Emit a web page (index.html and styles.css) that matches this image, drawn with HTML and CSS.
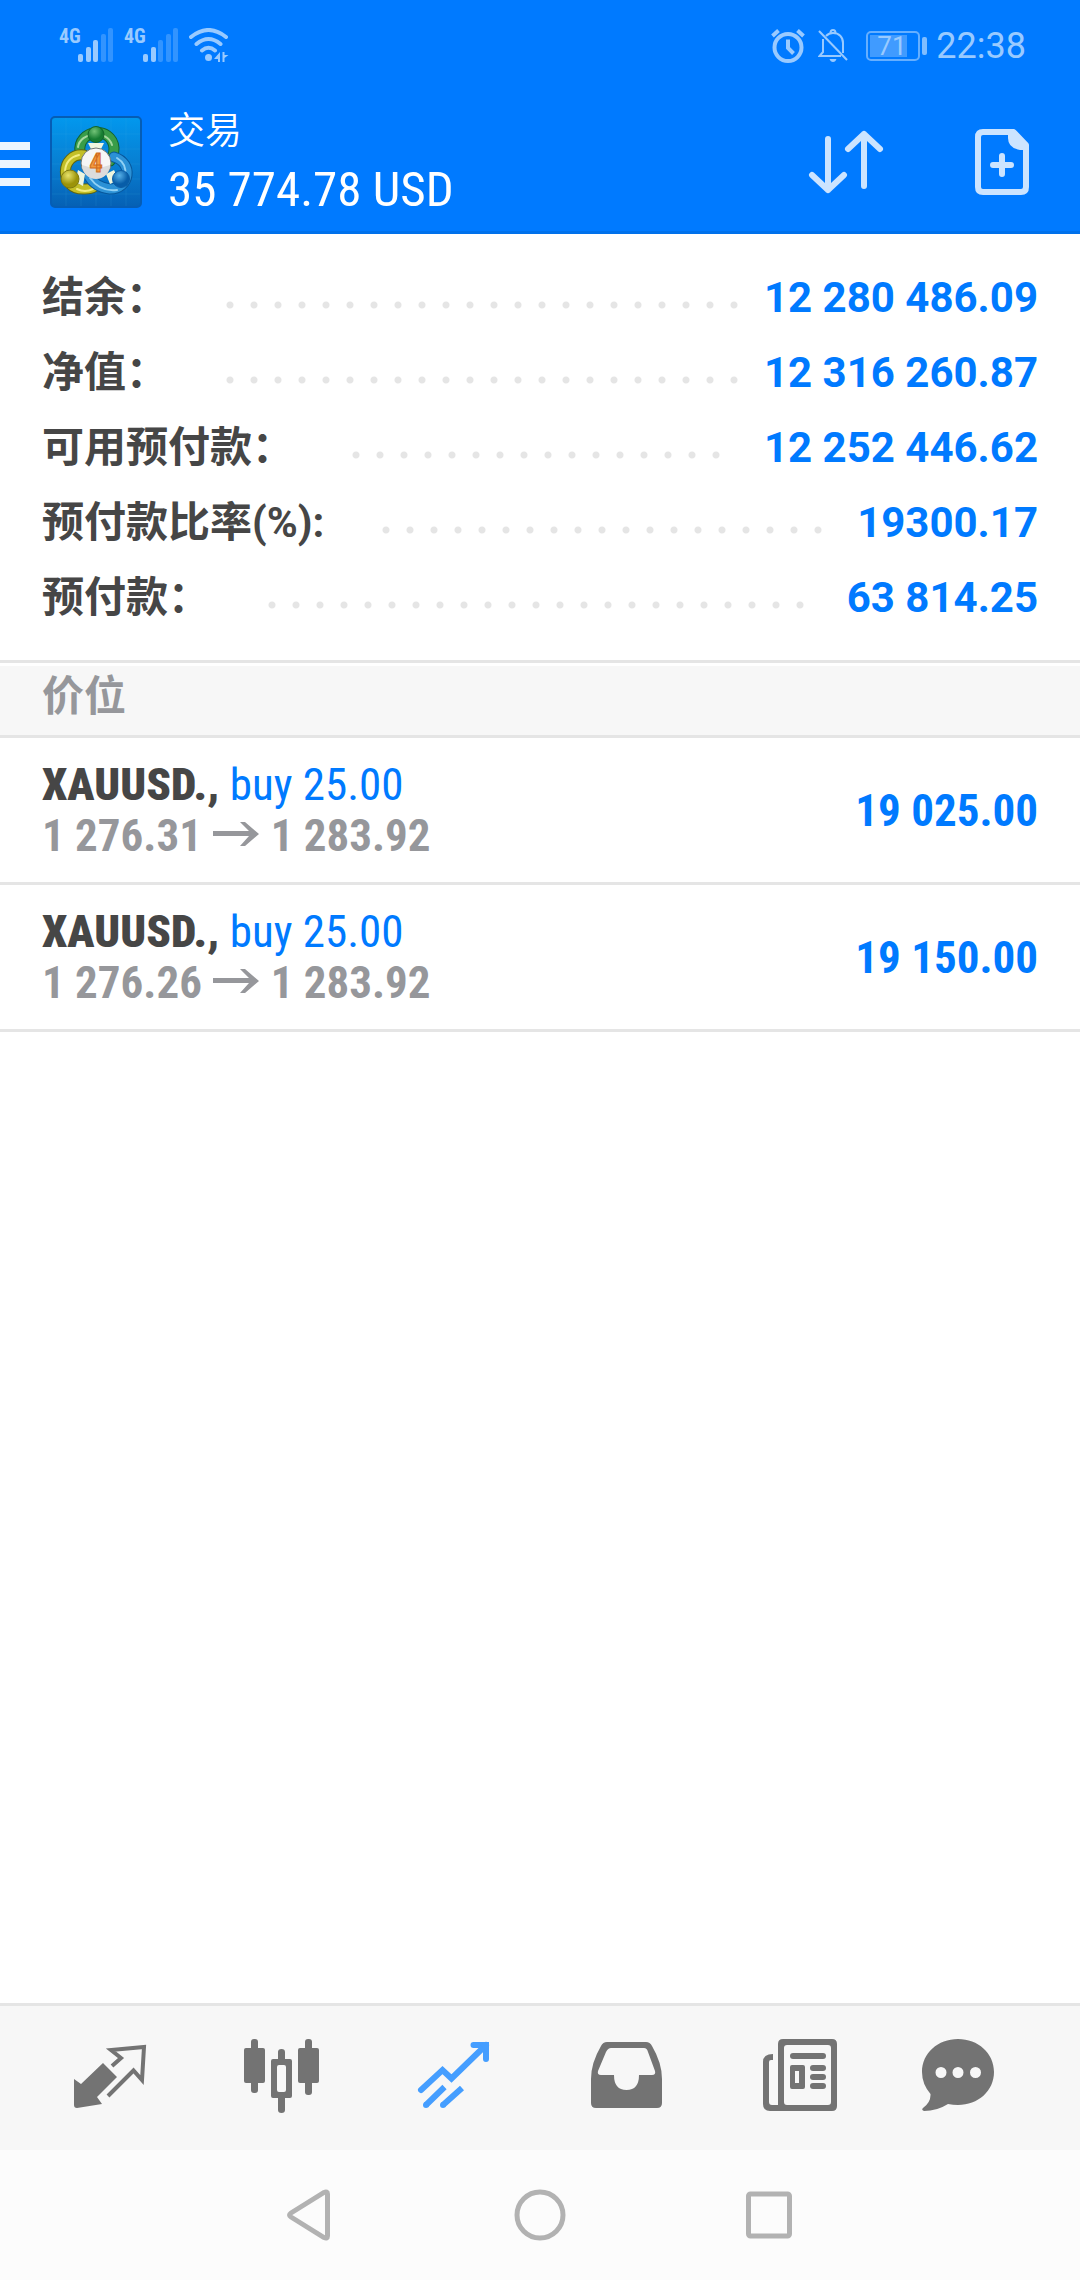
FILE: index.html
```html
<!DOCTYPE html>
<html lang="zh-CN">
<head>
<meta charset="utf-8">
<meta name="viewport" content="width=device-width, initial-scale=1">
<title>交易</title>
<link rel="stylesheet" href="styles.css">
</head>
<body>
<header class="header">
  <div class="status">
    <div class="status-group">
      <div class="signal">
        <span class="network">4G</span>
        <svg width="36" height="34" viewBox="0 0 36 34" fill="currentColor" aria-hidden="true">
          <rect x="0" y="26" width="5" height="8" rx="2"/><rect x="8" y="19" width="5" height="15" rx="2"/><rect x="15" y="12" width="5" height="22" rx="2"/>
          <g opacity=".33"><rect x="23" y="6" width="5" height="28" rx="2"/><rect x="30" y="0" width="5" height="34" rx="2"/></g>
        </svg>
      </div>
      <div class="signal">
        <span class="network">4G</span>
        <svg width="36" height="34" viewBox="0 0 36 34" fill="currentColor" aria-hidden="true">
          <rect x="0" y="26" width="5" height="8" rx="2"/><rect x="8" y="19" width="5" height="15" rx="2"/>
          <g opacity=".33"><rect x="15" y="12" width="5" height="22" rx="2"/><rect x="23" y="6" width="5" height="28" rx="2"/><rect x="30" y="0" width="5" height="34" rx="2"/></g>
        </svg>
      </div>
      <svg class="wifi" width="40" height="34" viewBox="0 0 40 34" fill="none" stroke="currentColor" stroke-width="4" stroke-linecap="round" aria-hidden="true">
        <path d="M2 9Q19.500-5 37 9M7.500 16Q19.500 6 31.500 16M13 22.500Q19.500 17 26 22.500"/>
        <circle cx="19.500" cy="29.500" r="3.500" fill="currentColor" stroke="none"/>
        <path d="M31 24v10h-2v-3h-4zM33.500 24v10h2v-4l4-3h-4v-3z" fill="currentColor" stroke="none"/>
      </svg>
    </div>
    <div class="status-group status-right">
      <svg width="34" height="34" viewBox="0 0 34 34" fill="none" stroke="currentColor" stroke-width="4" aria-hidden="true">
        <circle cx="17" cy="18.500" r="13.500"/><path d="M17 10.500v8.500l5.500 5.500"/><path d="M1.500 7l6-5.500M32.500 7l-6-5.500"/>
      </svg>
      <svg class="bell" width="30" height="34" viewBox="0 0 30 34" fill="none" stroke="currentColor" stroke-width="2" aria-hidden="true">
        <path d="M5 10v13l-3.500 4H23M8 7Q11 4 15 4c6 0 10 4 10 10v10"/><path d="M12.500 4Q12.500 1 15 1t2.500 3"/><path d="M1 2l28 29"/><path d="M11.500 30h7q-1 3-3.500 3t-3.500-3z" fill="currentColor" stroke="none"/>
      </svg>
      <div class="battery"><span class="battery-level">71</span></div>
      <span class="clock">22:38</span>
    </div>
  </div>
  <div class="toolbar">
    <button class="menu" type="button" aria-label="菜单"><span></span><span></span><span></span></button>
    <svg class="logo" width="92" height="92" viewBox="0 0 92 92" aria-hidden="true">
      <defs>
        <linearGradient id="sky" x1="0" y1="0" x2="0" y2="1"><stop offset="0" stop-color="#0298ee"/><stop offset=".55" stop-color="#087dd0"/><stop offset="1" stop-color="#0560b4"/></linearGradient>
        <radialGradient id="green" cx=".4" cy=".3"><stop offset="0" stop-color="#72c377"/><stop offset="1" stop-color="#167c31"/></radialGradient>
        <radialGradient id="gold" cx=".4" cy=".3"><stop offset="0" stop-color="#e8e36b"/><stop offset="1" stop-color="#9b9309"/></radialGradient>
        <radialGradient id="azure" cx=".4" cy=".3"><stop offset="0" stop-color="#58b2e9"/><stop offset="1" stop-color="#075da8"/></radialGradient>
      </defs>
      <rect x="1" y="1" width="90" height="90" rx="4" fill="url(#sky)" stroke="#055db5" stroke-width="2"/>
      <path d="M16 2v88M31 2v88M46 2v88M61 2v88M76 2v88M2 18h88M2 33h88M2 48h88M2 63h88M2 78h88" stroke="#43b3ee" stroke-opacity=".15"/>
      <g fill="none" stroke-linecap="round">
        <path d="M30 36C27 13 62 9 64 32q0 8-4 13" stroke="#126331" stroke-width="11"/>
        <path d="M30 36C27 13 62 9 64 32q0 8-4 13" stroke="#399d49" stroke-width="9"/>
        <path d="M28 31C30 16 57 13 62 29" stroke="#a6d99f" stroke-width="2"/>
        <path d="M34 39C10 36 8 75 35 73q6 0 9-2" stroke="#5f6411" stroke-width="11"/>
        <path d="M34 39C10 36 8 75 35 73q6 0 9-2" stroke="#c3bf27" stroke-width="9"/>
        <path d="M29 39Q15 42 15 57M27 73q8 4 16 0" stroke="#f3ec80" stroke-width="2"/>
        <path d="M64 41C84 47 80 73 60 73Q45 71 39 60" stroke="#07579b" stroke-width="11"/>
        <path d="M64 41C84 47 80 73 60 73Q45 71 39 60" stroke="#2b91d6" stroke-width="9"/>
        <path d="M67 42q10 6 8 17M40 62q10 14 27 12" stroke="#90d1f5" stroke-width="2"/>
      </g>
      <path d="M38 27h16l-4 8h-8zM28 54l7 4-2 12-8-4zM64 54l-8 4 4 10 9-4z" fill="#eef6df"/>
      <circle cx="46" cy="18.500" r="8" fill="url(#green)" stroke="#116428"/>
      <circle cx="20" cy="63" r="9" fill="url(#gold)" stroke="#7e7911"/>
      <circle cx="71" cy="63" r="8.500" fill="url(#azure)" stroke="#0b5ca5"/>
      <circle cx="46" cy="47" r="15" fill="#f6f6f6" stroke="#6f7772"/>
      <path d="M32 49a14 14 0 0 0 28 0q-14 5-28 0z" fill="#dcdcdc"/>
      <text class="logo-digit" x="46" y="56" text-anchor="middle">4</text>
    </svg>
    <div class="heading">
      <h1 class="title">交易</h1>
      <p class="total">35 774.78 USD</p>
    </div>
    <button class="tool" type="button" aria-label="排序">
      <svg width="76" height="66" viewBox="0 0 76 66" fill="none" stroke="currentColor" stroke-width="6" stroke-linecap="round" stroke-linejoin="round">
        <path d="M20 10v51M4 46l16 15 16-15M56 57V5M40 20L56 5l16 15"/>
      </svg>
    </button>
    <button class="tool" type="button" aria-label="新订单">
      <svg width="54" height="66" viewBox="0 0 54 66" fill="none" stroke="currentColor" stroke-width="6" stroke-linejoin="round" stroke-linecap="round">
        <path d="M8 3h30.500L51 16v42q0 5-5 5H8q-5 0-5-5V8q0-5 5-5z"/><path d="M33 3h6l13 13v5h-7q-12-2-12-12z" fill="currentColor" stroke="none"/><path d="M27 27v18M18 36h18"/>
      </svg>
    </button>
  </div>
</header>

<main class="content">
  <dl class="summary">
    <div class="summary-row"><dt>结余：</dt><dd class="leader"></dd><dd>12 280 486.09</dd></div>
    <div class="summary-row"><dt>净值：</dt><dd class="leader"></dd><dd>12 316 260.87</dd></div>
    <div class="summary-row"><dt>可用预付款：</dt><dd class="leader"></dd><dd>12 252 446.62</dd></div>
    <div class="summary-row"><dt>预付款比率(%):</dt><dd class="leader"></dd><dd>19300.17</dd></div>
    <div class="summary-row"><dt>预付款：</dt><dd class="leader"></dd><dd>63 814.25</dd></div>
  </dl>
  <h2 class="section-title">价位</h2>
  <ul class="positions">
    <li class="position">
      <div>
        <p class="order"><b>XAUUSD.,</b> <span class="side">buy 25.00</span></p>
        <p class="prices">1 276.31 <svg class="arrow" width="46" height="30" viewBox="0 0 46 30" aria-label="至"><path d="M0 10h36L27 1h5l14 12-14 12h-5l9-10H0z" fill="currentColor"/></svg> 1 283.92</p>
      </div>
      <p class="profit">19 025.00</p>
    </li>
    <li class="position">
      <div>
        <p class="order"><b>XAUUSD.,</b> <span class="side">buy 25.00</span></p>
        <p class="prices">1 276.26 <svg class="arrow" width="46" height="30" viewBox="0 0 46 30" aria-label="至"><path d="M0 10h36L27 1h5l14 12-14 12h-5l9-10H0z" fill="currentColor"/></svg> 1 283.92</p>
      </div>
      <p class="profit">19 150.00</p>
    </li>
  </ul>
</main>

<nav class="tabs" aria-label="主导航">
  <button class="tab" type="button" aria-label="行情">
    <svg width="96" height="96" viewBox="0 0 96 96"><path d="M12 49l7 5 22-21 14 14-20 20 5 7-25 4q-3 0-3-3z" fill="currentColor" stroke="none"/><path d="M50 36l9-8-10-8 33-3-2 33-8.500-9.500L46 66" fill="none" stroke="currentColor" stroke-width="4"/></svg>
  </button>
  <button class="tab" type="button" aria-label="图表">
    <svg width="96" height="96" viewBox="0 0 96 96" fill="currentColor"><rect x="10" y="18" width="21" height="35" rx="2"/><rect x="17" y="9" width="7" height="54" rx="3"/><rect x="64" y="18" width="21" height="35" rx="2"/><rect x="71" y="9" width="7" height="56" rx="3"/><path d="M44 29v-7q0-3 3.500-3t3.500 3v7h5q2 0 2 2v35q0 2-2 2h-5v12q0 3-3.500 3t-3.500-3V68h-5q-2 0-2-2V31q0-2 2-2zM45 35q-2 0-2 2v23q0 2 2 2h5q2 0 2-2V37q0-2-2-2z" fill-rule="evenodd"/></svg>
  </button>
  <button class="tab tab-active" type="button" aria-label="交易" aria-current="page">
    <svg width="96" height="96" viewBox="0 0 96 96" fill="none" stroke="currentColor" stroke-width="6"><path d="M15 60l21.500-20 9 8.500L80 15M67.500 15H80v14" stroke-linecap="round"/><path d="M72 12h11v13z" fill="currentColor" stroke="none"/><path d="M20 75l18.500-18M37 75l19-17"/><g fill="currentColor" stroke="none"><circle cx="20" cy="75" r="3"/><circle cx="37" cy="75" r="3"/></g></svg>
  </button>
  <button class="tab" type="button" aria-label="历史">
    <svg width="96" height="96" viewBox="0 0 96 96" fill="currentColor"><path fill-rule="evenodd" d="M29 12h39q4 0 6 4 10 17 10 33v24q0 5-5 5H18q-5 0-5-5V49q0-16 10-33 2-4 6-4zM33 18q-3 0-5 4l-8 19q-1 4 3 4h13q0 15 12.500 15T61 45h13q4 0 3-4l-7-19q-1-4-4-4z"/></svg>
  </button>
  <button class="tab" type="button" aria-label="新闻">
    <svg width="96" height="96" viewBox="0 0 96 96" fill="currentColor"><path fill-rule="evenodd" d="M33 9h49q5 0 5 5v62q0 5-5 5H20q-7 0-7-7V32q0-8 10-8v6h-2q-2 0-2 2v40q0 3 3 3h6V14q0-5 5-5zM37 15q-3 0-3 3v54q0 3 3 3h41q3 0 3-3V18q0-3-3-3z"/><rect x="40" y="23" width="36" height="6" rx="3"/><path fill-rule="evenodd" d="M42 35h11q2 0 2 2v20q0 2-2 2H42q-2 0-2-2V37q0-2 2-2zM45 41v12h4V41z"/><rect x="60" y="35" width="16" height="6" rx="3"/><rect x="60" y="44" width="16" height="6" rx="3"/><rect x="60" y="53" width="16" height="6" rx="3"/></svg>
  </button>
  <button class="tab" type="button" aria-label="消息">
    <svg width="96" height="96" viewBox="0 0 96 96" fill="currentColor"><path fill-rule="evenodd" d="M36 9c20 0 36 14 36 33S56 75 36 75q-5 0-10-1-11 7-24 7-3-1-1-3 8-6 7.500-14Q0 54 0 42C0 23 16 9 36 9zM19 37a5.500 5.500 0 1 0 0 11 5.500 5.500 0 0 0 0-11zM36 37a5.500 5.500 0 1 0 0 11 5.500 5.500 0 0 0 0-11zM53.500 37a5.500 5.500 0 1 0 0 11 5.500 5.500 0 0 0 0-11z"/></svg>
  </button>
</nav>

<nav class="system" aria-label="系统导航">
  <button type="button" aria-label="返回"><svg width="60" height="60" viewBox="0 0 60 60"><path d="M44 7.500Q47.500 6 47.500 9v42q0 3-3.500 1.500L11 32q-3-2 0-4z"/></svg></button>
  <button type="button" aria-label="主页"><svg width="60" height="60" viewBox="0 0 60 60"><circle cx="30" cy="30" r="23"/></svg></button>
  <button type="button" aria-label="最近任务"><svg width="60" height="60" viewBox="0 0 60 60"><rect x="8.500" y="9" width="41" height="42" rx="2"/></svg></button>
</nav>
</body>
</html>
```
FILE: styles.css
```css
* { box-sizing: border-box; }

body {
  margin: 0;
  min-height: 100vh;
  display: flex;
  flex-direction: column;
  background: #fff;
  color: #464646;
  font-family: Roboto, "Noto Sans CJK SC", sans-serif;
}

h1, h2, p, dl, dd, ul { margin: 0; padding: 0; }

button {
  margin: 0;
  padding: 0;
  border: 0;
  background: none;
  color: inherit;
  font: inherit;
}

svg { display: block; flex: none; }

/* Header */
.header {
  background: #007aff;
  border-bottom: 3px solid #0071eb;
}

.status {
  display: flex;
  justify-content: space-between;
  height: 92px;
  padding: 28px 54px 0 59px;
  color: #99caff;
}

.status-group { display: flex; align-items: flex-start; }
.status-right { align-items: center; height: 36px; }
.signal { display: flex; margin-right: 10px; }

.network {
  width: 19px;
  font: 700 20px/16px "Roboto Condensed", "Liberation Sans Narrow", Roboto, sans-serif;
}

.bell { margin: 0 18px 0 13px; }

.battery {
  position: relative;
  width: 54px;
  height: 30px;
  margin-right: 16px;
  padding: 2px;
  border: 2px solid #66afff;
  border-radius: 5px;
}

.battery::after {
  content: "";
  position: absolute;
  right: -9px;
  top: 4px;
  width: 5px;
  height: 18px;
  border-radius: 2px;
  background: #80bdff;
}

.battery-level {
  display: block;
  width: 37px;
  height: 22px;
  padding-left: 7px;
  background: #409bff;
  font-size: 26px;
  line-height: 22px;
}

.clock { font-size: 36px; line-height: 36px; }

.toolbar {
  display: flex;
  align-items: center;
  height: 139px;
  padding-right: 51px;
  color: #cce4ff;
}

.menu {
  display: grid;
  gap: 10px;
  width: 30px;
  margin-right: 20px;
  padding-top: 4px;
}

.menu span { height: 8px; background: #ebf5ff; }

.logo-digit {
  fill: #f59b3c;
  stroke: #d06a1c;
  font: 700 26px "Roboto Condensed", "Liberation Sans Narrow", Roboto, sans-serif;
}

.heading { flex: 1; padding-top: 18px; margin-left: 26px; color: #fff; }
.title { font-size: 37px; line-height: 38px; font-weight: 350; }

.total {
  font: 400 49px/78px "Roboto Condensed", "Liberation Sans Narrow", Roboto, sans-serif;
  white-space: nowrap;
}

.tool + .tool { margin-left: 91px; }

/* Account summary */
.summary {
  padding: 26px 42px 25px;
  border-bottom: 3px solid #e5e5e5;
}

.summary-row {
  display: flex;
  align-items: center;
  height: 75px;
  color: #007aff;
  font-size: 42px;
  line-height: 75px;
  font-weight: 700;
  white-space: nowrap;
}

.summary-row dt { color: #464646; }

.leader {
  flex: 1;
  min-width: 0;
  margin: 14px 8px 0 58px;
}

/* Only whole dots are shown, so the strip is cut to a multiple of the pitch. */
.leader::before {
  content: "";
  display: block;
  width: round(down, 100%, 24px);
  height: 8px;
  background: radial-gradient(circle at 4px 4px, #e5e5e5 3px, transparent 4px) 0 0 / 24px 8px repeat-x;
}

/* Positions */
.section-title {
  margin-top: 3px;
  padding: 0 42px;
  height: 72px;
  border-bottom: 3px solid #e5e5e5;
  background: #f7f7f7;
  color: #96979b;
  font-size: 42px;
  line-height: 62px;
  font-weight: 700;
}

.positions { list-style: none; }

.position {
  display: flex;
  align-items: center;
  justify-content: space-between;
  height: 147px;
  padding: 0 42px;
  border-bottom: 3px solid #e5e5e5;
  font: 700 45px/51px "Roboto Condensed", "Liberation Sans Narrow", Roboto, sans-serif;
  white-space: nowrap;
}

.side { color: #007aff; font-weight: 400; }
.prices { color: #96979b; }
.arrow { display: inline-block; margin: 0 1px; }
.profit { color: #007aff; }

.content { flex: 1; }

/* Bottom bars */
.tabs {
  display: flex;
  height: 147px;
  padding: 0 24px;
  border-top: 3px solid #e5e5e5;
  background: #f7f7f7;
  color: #737373;
}

.tab { flex: 1; display: grid; place-items: center; }
.tab-active { color: #459eff; }

.system {
  display: flex;
  justify-content: center;
  align-items: center;
  gap: 170px;
  height: 130px;
  background: #fcfcfc;
}

.system svg { fill: none; stroke: #b2b2b2; stroke-width: 5; }
```
